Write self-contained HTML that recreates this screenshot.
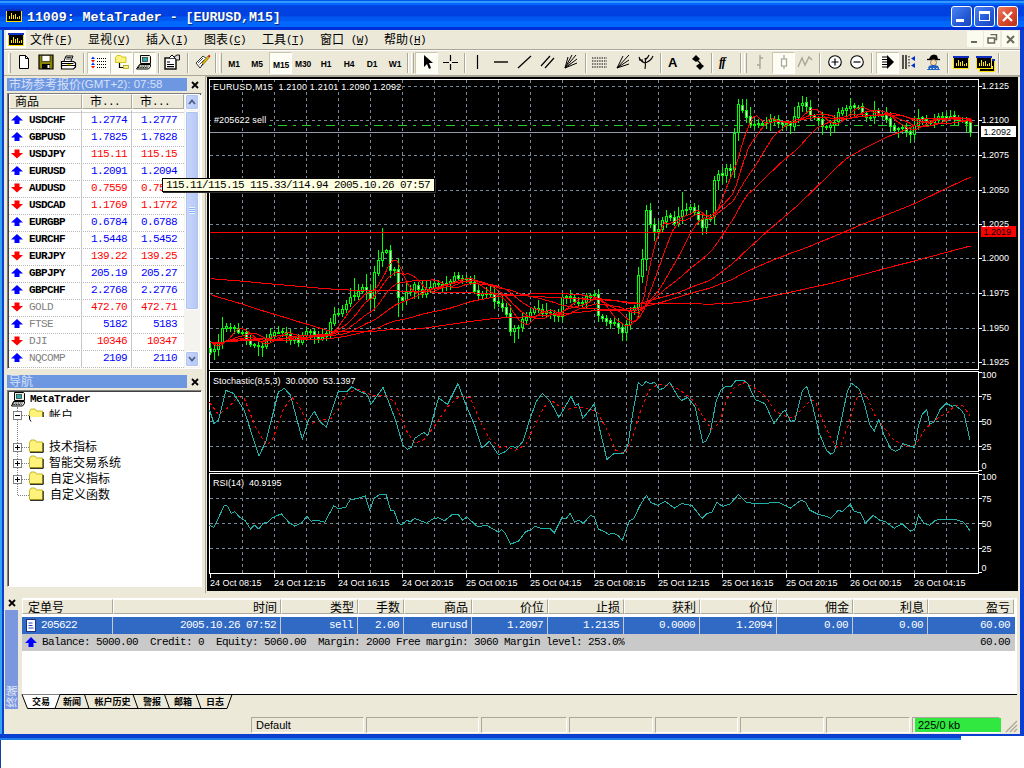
<!DOCTYPE html>
<html lang="zh-CN"><head><meta charset="utf-8"><title>11009: MetaTrader - [EURUSD,M15]</title>
<style>
*{box-sizing:border-box;margin:0;padding:0}
html,body{width:1024px;height:768px;overflow:hidden;background:#fff}
body{position:relative;font-family:"Liberation Mono","Noto Sans CJK SC",monospace;font-size:11px;color:#000}
.a{position:absolute}
.win{left:0;top:0;width:1024px;height:736px;background:#0A3FD0}
.win2{left:0;top:734px;width:961px;height:6px;background:linear-gradient(#0A3FD0 0,#0A3FD0 4px,#1C7CE8 4px)}
.client{left:4px;top:30px;width:1016px;height:704px;background:#ECE9D8}
.title{left:0;top:0;width:1024px;height:30px;background:linear-gradient(#0058E6 0,#0058E6 1px,#3399FF 1px,#3399FF 3px,#0066FF 3px,#0066FF 5px,#0044E2 5px,#0040E0 16px,#0058F0 17px,#0058F0 21px,#0068FF 21px,#0068FF 27px,#0030D8 27px,#0030D8 30px)}
.ttext{left:27px;top:10px;color:#fff;font:bold 13.3px/16px "Liberation Mono",monospace;letter-spacing:-0.05px;white-space:pre;text-shadow:1px 1px 0 #0A2A80}
.mi{top:31px;height:16px;line-height:15px;white-space:pre;font-size:12px}
.mi i{font-style:normal;font-size:11px;letter-spacing:-0.6px;position:relative;top:1px}
.mi u{text-decoration:underline}
.sm{font-family:"Liberation Mono","Noto Sans CJK SC",monospace;font-size:11px;letter-spacing:-0.6px;white-space:pre}
.cj{font-family:"Liberation Sans","Noto Sans CJK SC",sans-serif;font-size:12px;white-space:pre}
span.cj{position:relative;top:1px}
div.cj{margin-top:1px}
.mi span.cj,.th span.cj{top:2px}
.tb{font:bold 8.5px/12px "Liberation Sans",sans-serif;letter-spacing:-0.2px;top:58px;width:24px;text-align:center}
.sep{top:53px;width:2px;height:20px;border-left:1px solid #ACA899;border-right:1px solid #fff}
.grip{top:53px;width:3px;height:20px;border-left:1px solid #fff;border-right:1px solid #ACA899;background:#ECE9D8}
.pressed{top:52px;height:22px;background:#FDFDF4;border:1px solid #C8C5B2;border-right-color:#fff;border-bottom-color:#fff}
.ptitle{background:#6E97E2;color:#D6E0F8;height:13px;line-height:13px;padding-left:2px;overflow:hidden}
.row{left:9px;width:175px;height:17px;border-bottom:1px dotted #B8B8B8}
.row span{position:absolute;top:1px;line-height:13px}
.hdr{background:#ECE9D8;border:1px solid #fff;border-right-color:#ACA899;border-bottom-color:#ACA899;height:15px;line-height:12px;overflow:hidden}
.blue{color:#0000FF}.red{color:#FF0000}.gray{color:#808080}
.th{top:599px;height:15px;line-height:13px;text-align:right;padding-right:3px;background:#ECE9D8;border:1px solid #fff;border-right-color:#ACA899;border-bottom-color:#ACA899;overflow:hidden}
.td{top:617px;height:17px;line-height:16px;text-align:right;padding-right:4px;color:#fff;border-right:1px solid #C8C8C8}
.pane{top:717px;height:16px;border:1px solid #ACA899;border-right-color:#fff;border-bottom-color:#fff}
</style></head>
<body>
<div class="a win" style=""></div>
<div class="a win2" style=""></div>
<div class="a " style="left:0px;top:740px;width:1px;height:28px;background:#1040A0"></div>
<div class="a client" style=""></div>
<div class="a " style="left:0px;top:30px;width:2px;height:704px;background:#35A5F0"></div>
<div class="a title" style=""></div><svg class="a" style="left:6px;top:9px" width="16" height="13" viewBox="0 0 16 13" ><rect x="0.5" y="0.5" width="15" height="12" fill="#000" stroke="#FFE000"/><rect x="0" y="0" width="16" height="2" fill="#1030C0"/><path d="M3.500 10V7M5.500 10V4M7.500 10V6M9.500 10V5M11.500 10V8M13.500 10V7" stroke="#FFE800" stroke-width="1"/></svg><div class="a ttext" style="">11009: MetaTrader - [EURUSD,M15]</div><div class="a " style="left:951px;top:6px;width:21px;height:21px;border:1px solid #fff;border-radius:3px;background:linear-gradient(135deg,#4C84F0,#2458D8 60%,#1C48C0)"><div class="a" style="left:4px;top:12px;width:8px;height:3px;background:#fff"></div></div><div class="a " style="left:974px;top:6px;width:21px;height:21px;border:1px solid #fff;border-radius:3px;background:linear-gradient(135deg,#4C84F0,#2458D8 60%,#1C48C0)"><div class="a" style="left:4px;top:4px;width:11px;height:10px;border:1px solid #fff;border-top-width:3px"></div></div><div class="a " style="left:997px;top:6px;width:21px;height:21px;border:1px solid #fff;border-radius:3px;background:linear-gradient(135deg,#EC8060,#D8482C 55%,#B83018)"><svg class="a" style="left:3px;top:3px" width="13" height="13" viewBox="0 0 13 13" ><path d="M2 2L11 11M11 2L2 11" stroke="#fff" stroke-width="2.300"/></svg></div>
<div class="a " style="left:6px;top:30px;width:20px;height:18px;background:#fff"></div><svg class="a" style="left:8px;top:33px" width="16" height="13" viewBox="0 0 16 13" ><rect x="0.5" y="0.5" width="15" height="12" fill="#000" stroke="#FFE000"/><rect x="0" y="0" width="16" height="2" fill="#1030C0"/><path d="M3.500 10V7M5.500 10V4M7.500 10V6M9.500 10V5M11.500 10V8M13.500 10V7" stroke="#FFE800" stroke-width="1"/></svg><div class="a mi" style="left:30px"><span class="cj">文件</span><i>(<u>F</u>)</i></div><div class="a mi" style="left:88px"><span class="cj">显视</span><i>(<u>V</u>)</i></div><div class="a mi" style="left:146px"><span class="cj">插入</span><i>(<u>I</u>)</i></div><div class="a mi" style="left:204px"><span class="cj">图表</span><i>(<u>C</u>)</i></div><div class="a mi" style="left:262px"><span class="cj">工具</span><i>(<u>T</u>)</i></div><div class="a mi" style="left:320px"><span class="cj">窗口  </span><i>(<u>W</u>)</i></div><div class="a mi" style="left:384px"><span class="cj">帮助</span><i>(<u>H</u>)</i></div><div class="a " style="left:967px;top:31px;width:16px;height:16px;background:#FBFBF0"></div><div class="a " style="left:984px;top:31px;width:16px;height:16px;background:#FBFBF0"></div><div class="a " style="left:1002px;top:31px;width:16px;height:16px;background:#FBFBF0"></div><div class="a " style="left:971px;top:41px;width:6px;height:2px;background:#6A6A5A"></div><svg class="a" style="left:987px;top:34px" width="11" height="10" viewBox="0 0 11 10" ><path d="M3.5 0.5h6v5h-2M1 4h6.5v5H1z" stroke="#6A6A5A" stroke-width="1.5" fill="none"/></svg><svg class="a" style="left:1006px;top:35px" width="9" height="9" viewBox="0 0 9 9" ><path d="M1 1l7 7M8 1l-7 7" stroke="#6A6A5A" stroke-width="2"/></svg>
<div class="a " style="left:4px;top:49px;width:1016px;height:1px;background:#ACA899"></div><div class="a " style="left:4px;top:50px;width:1016px;height:1px;background:#fff"></div><div class="a " style="left:4px;top:75px;width:1016px;height:1px;background:#ACA899"></div><div class="a grip" style="left:8px"></div><div class="a grip" style="left:219px"></div><div class="a grip" style="left:411px"></div><div class="a grip" style="left:744px"></div><div class="a sep" style="left:215px"></div><div class="a sep" style="left:407px"></div><div class="a sep" style="left:740px"></div><div class="a sep" style="left:998px"></div><div class="a sep" style="left:83px"></div><div class="a sep" style="left:158px"></div><div class="a sep" style="left:187px"></div><div class="a sep" style="left:464px"></div><div class="a sep" style="left:585px"></div><div class="a sep" style="left:660px"></div><div class="a sep" style="left:711px"></div><div class="a sep" style="left:819px"></div><div class="a sep" style="left:871px"></div><div class="a sep" style="left:947px"></div><div class="a pressed" style="left:87px;width:23px"></div><div class="a pressed" style="left:110px;width:23px"></div><div class="a pressed" style="left:133px;width:23px"></div><div class="a pressed" style="left:269px;width:23px"></div><div class="a pressed" style="left:415px;width:23px"></div><div class="a pressed" style="left:772px;width:23px"></div><div class="a pressed" style="left:876px;width:23px"></div><svg class="a" style="left:16px;top:54px" width="16" height="16" viewBox="0 0 16 16" ><path d="M3.5 1.5h6l3 3v10h-9z" fill="#fff" stroke="#000"/><path d="M9.5 1.5v3h3" fill="none" stroke="#000"/></svg><svg class="a" style="left:38px;top:54px" width="16" height="16" viewBox="0 0 16 16" ><path d="M1 1h14v14H1z" fill="#8C8400"/><path d="M1 1h14v14H1z" fill="none" stroke="#000" stroke-width="1.2"/><rect x="4" y="1.5" width="8" height="6" fill="#fff" stroke="#000" stroke-width=".6"/><rect x="4" y="10" width="8" height="5" fill="#000"/><rect x="9.5" y="11" width="2" height="3" fill="#fff"/></svg><svg class="a" style="left:60px;top:54px" width="18" height="16" viewBox="0 0 18 16" ><path d="M4 7l2-5h7l-2 5" fill="#fff" stroke="#000"/><path d="M6.5 3.5h5M6 5h5" stroke="#000" stroke-width=".8"/><path d="M1.5 7.5h12l2 1.5v4l-2 2h-12z" fill="#fff" stroke="#000" stroke-width="1.2"/><path d="M1.5 11.5h13.5M1.5 9.5h12" stroke="#000"/><rect x="7" y="10" width="4" height="1.2" fill="#E8D800"/></svg><svg class="a" style="left:91px;top:55px" width="15" height="15" viewBox="0 0 15 15" ><path d="M0 4 l2 -2.5 l2 2.5z" fill="#0030FF"/><path d="M5.500 3.5h10" stroke="#000" stroke-width="1" stroke-dasharray="1 1" shape-rendering="crispEdges"/><path d="M0 5 l2 2.5 l2 -2.5z" fill="#FF0000"/><path d="M5.500 6.5h10" stroke="#000" stroke-width="1" stroke-dasharray="1 1" shape-rendering="crispEdges"/><path d="M0 10 l2 -2.5 l2 2.5z" fill="#0030FF"/><path d="M5.500 9.5h10" stroke="#000" stroke-width="1" stroke-dasharray="1 1" shape-rendering="crispEdges"/><path d="M0 11 l2 2.5 l2 -2.5z" fill="#FF0000"/><path d="M5.500 12.5h10" stroke="#000" stroke-width="1" stroke-dasharray="1 1" shape-rendering="crispEdges"/></svg><svg class="a" style="left:114px;top:54px" width="16" height="16" viewBox="0 0 16 16" ><path d="M1.500 3.500l1.500-2h3.500l1.500 1.500H12v5.500H1.500z" fill="#FFF27A" stroke="#C8B800" stroke-width=".8"/><path d="M5.500 9v4.500h4" stroke="#000" stroke-width="1.200" fill="none"/><rect x="9.500" y="11.500" width="5" height="3" fill="#FFF27A" stroke="#A09000" stroke-width=".7"/></svg><svg class="a" style="left:136px;top:54px" width="16" height="16" viewBox="0 0 16 16" ><path d="M4.500 1.500h9l1 1v7h-10z" fill="#F0F0E8" stroke="#000"/><rect x="6.500" y="3.500" width="5" height="4" fill="#20B0B0" stroke="#404040" stroke-width=".8"/><path d="M3.500 10.500h11v2l-2 2.500H0.500z" fill="#E8E8E0" stroke="#000"/><path d="M3 12h9.500M2 13.500h9.500" stroke="#000" stroke-width="1" stroke-dasharray="1 .7"/></svg><svg class="a" style="left:164px;top:54px" width="17" height="16" viewBox="0 0 17 16" ><rect x="1" y="4" width="11" height="11" fill="#fff" stroke="#000" stroke-width="1.4"/><path d="M3 8h3M3 10.5h7M3 12.7h7" stroke="#000" stroke-width="1.2"/><path d="M5 4l3-3 3 3" fill="#fff" stroke="#000"/><path d="M10 3l3-2h2.5v5l-3 0z" fill="#D8D8D8" stroke="#000" stroke-width=".9"/></svg><svg class="a" style="left:195px;top:54px" width="16" height="16" viewBox="0 0 16 16" ><path d="M1 9l7-7 4 3-7 9z" fill="#fff" stroke="#000" stroke-width=".8"/><path d="M3 9l5-5M4.5 10.5l5-5M6 12l3-3" stroke="#000" stroke-width=".7"/><path d="M7 9l6-7 1.5 1.2-6 7z" fill="#E8C000" stroke="#605000" stroke-width=".6"/><path d="M13 2l1-1.2 1.5 1.2-1 1.2z" fill="#E00000"/></svg><div class="a tb" style="left:222px;top:58px">M1</div><div class="a tb" style="left:245px;top:58px">M5</div><div class="a tb" style="left:269px;top:59px">M15</div><div class="a tb" style="left:291px;top:58px">M30</div><div class="a tb" style="left:314px;top:58px">H1</div><div class="a tb" style="left:337px;top:58px">H4</div><div class="a tb" style="left:360px;top:58px">D1</div><div class="a tb" style="left:383px;top:58px">W1</div><svg class="a" style="left:421px;top:54px" width="14" height="16" viewBox="0 0 14 16" ><path d="M3 1v12l3-3 2 5 2-1-2-5h4z" fill="#000"/></svg><svg class="a" style="left:443px;top:55px" width="15" height="15" viewBox="0 0 15 15" ><path d="M7.5 0v6M7.5 9v6M0 7.5h6M9 7.5h6" stroke="#000" stroke-width="1.2"/></svg><svg class="a" style="left:470px;top:54px" width="16" height="16" viewBox="0 0 16 16" ><path d="M7.5 1v14" stroke="#000" stroke-width="1.2"/></svg><svg class="a" style="left:493px;top:54px" width="16" height="16" viewBox="0 0 16 16" ><path d="M1 8h14" stroke="#000" stroke-width="1.4"/></svg><svg class="a" style="left:517px;top:54px" width="16" height="16" viewBox="0 0 16 16" ><path d="M1 14L14 2" stroke="#000" stroke-width="1.2"/></svg><svg class="a" style="left:540px;top:54px" width="16" height="16" viewBox="0 0 16 16" ><path d="M1 12L10 2M5 14L14 4" stroke="#000" stroke-width="1.2"/></svg><svg class="a" style="left:563px;top:54px" width="16" height="16" viewBox="0 0 16 16" ><path d="M2 14L13 1M2 14L14 5M2 14L14 9M2 14L9 1M2 14L5 3" stroke="#000" stroke-width="1"/></svg><svg class="a" style="left:592px;top:55px" width="15" height="15" viewBox="0 0 15 15" ><path d="M0 3h15M0 6h15M0 9h15M0 12h15" stroke="#000" stroke-width="1.2" stroke-dasharray="1.4 1"/></svg><svg class="a" style="left:615px;top:54px" width="16" height="16" viewBox="0 0 16 16" ><path d="M2 14L14 1M2 14L14 6M2 14L14 10M2 14L8 2" stroke="#000" stroke-width="1"/></svg><svg class="a" style="left:638px;top:54px" width="16" height="16" viewBox="0 0 16 16" ><path d="M7 15Q8 8 7 4M7 9Q2 7 1 3M7 9Q13 7 15 2M7 6Q10 4 11 1M1 6h4" stroke="#000" stroke-width="1.1" fill="none"/></svg><div class="a " style="left:668px;top:55px;font:bold 13px/16px Liberation Sans,sans-serif">A</div><svg class="a" style="left:690px;top:54px" width="16" height="16" viewBox="0 0 16 16" ><path d="M2 5l4-4 4 4-4 3z" fill="#000"/><path d="M6 12l4-3 4 3-4 4z" fill="#000"/><path d="M7 6l4 4" stroke="#000" stroke-width="1.2"/></svg><div class="a " style="left:719px;top:54px;font:italic bold 12px/16px Liberation Serif,serif;letter-spacing:-1px">ff</div><svg class="a" style="left:752px;top:54px" width="16" height="16" viewBox="0 0 16 16" ><path d="M8 1v14M8 4h3M5 11h3" stroke="#A8A598" stroke-width="1.4"/></svg><svg class="a" style="left:776px;top:54px" width="16" height="16" viewBox="0 0 16 16" ><path d="M8 1v14" stroke="#A8A598" stroke-width="1.2"/><rect x="5.5" y="5" width="5" height="7" fill="#fff" stroke="#A8A598" stroke-width="1.2"/></svg><svg class="a" style="left:797px;top:54px" width="16" height="16" viewBox="0 0 16 16" ><path d="M1 13L5 4l3 7 4-8 3 3" stroke="#A8A598" stroke-width="1.4" fill="none"/></svg><svg class="a" style="left:827px;top:54px" width="16" height="16" viewBox="0 0 16 16" ><circle cx="8" cy="8" r="6.3" fill="#fff" stroke="#000" stroke-width="1.1"/><path d="M4.5 8h7M8 4.5v7" stroke="#000" stroke-width="1.2"/></svg><svg class="a" style="left:849px;top:54px" width="16" height="16" viewBox="0 0 16 16" ><circle cx="8" cy="8" r="6.3" fill="#fff" stroke="#000" stroke-width="1.1"/><path d="M4.5 8h7" stroke="#000" stroke-width="1.2"/></svg><svg class="a" style="left:880px;top:54px" width="16" height="16" viewBox="0 0 16 16" ><path d="M2 3h5M2 5.5h5M2 8h5M2 10.5h5M2 13h5" stroke="#000" stroke-width="1"/><path d="M7 1l7 7-7 7z" fill="#000"/></svg><svg class="a" style="left:901px;top:54px" width="16" height="16" viewBox="0 0 16 16" ><path d="M2 1v14M5 1v14" stroke="#000" stroke-width="1.3"/><path d="M8 2v12" stroke="#000" stroke-dasharray="1.5 1.5"/><path d="M14 2l-4 2.5 4 2.5zM14 9l-4 2.500 4 2.500z" fill="#0030D0"/></svg><svg class="a" style="left:925px;top:54px" width="17" height="17" viewBox="0 0 17 17" ><path d="M4 5h9l-1-3.500-3-1-3 1z" fill="#000"/><path d="M2 5.500h13" stroke="#000" stroke-width="1.3"/><circle cx="8.500" cy="8.500" r="3" fill="#F8D8B0" stroke="#604020" stroke-width=".6"/><path d="M2 16l2-4 3-1h3l3 1 2 4z" fill="#2060C0"/><path d="M2 14.500h13" stroke="#fff" stroke-width=".8" stroke-dasharray="1.500 1.500"/></svg><svg class="a" style="left:953px;top:56px" width="16" height="13" viewBox="0 0 16 13" ><rect x="0.5" y="0.5" width="15" height="12" fill="#000" stroke="#FFE000"/><rect x="0" y="0" width="16" height="2" fill="#1030C0"/><path d="M3.500 10V7M5.500 10V4M7.500 10V6M9.500 10V5M11.500 10V8M13.500 10V7" stroke="#FFE800" stroke-width="1"/></svg><svg class="a" style="left:979px;top:59px" width="16" height="13" viewBox="0 0 16 13" ><rect x="0.5" y="0.5" width="15" height="12" fill="#000" stroke="#FFE000"/><rect x="0" y="0" width="16" height="2" fill="#1030C0"/><path d="M3.500 10V7M5.500 10V4M7.500 10V6M9.500 10V5M11.500 10V8M13.500 10V7" stroke="#FFE800" stroke-width="1"/></svg><svg class="a" style="left:976px;top:56px" width="16" height="13" viewBox="0 0 16 13" ><rect x="0.5" y="0.5" width="15" height="12" fill="#000" stroke="#FFE000"/><rect x="0" y="0" width="16" height="2" fill="#1030C0"/><path d="M3.500 10V7M5.500 10V4M7.500 10V6M9.500 10V5M11.500 10V8M13.500 10V7" stroke="#FFE800" stroke-width="1"/></svg>
<div class="a ptitle" style="left:7px;top:78px;width:180px;height:13px;"><span class="cj" style="font-size:12px;top:1px">市场参考报价</span><span style="font:11.500px/13px Liberation Sans,sans-serif;position:relative;top:0">(GMT+2): 07:58</span></div><svg class="a" style="left:191px;top:81px" width="8" height="8" viewBox="0 0 8 8" ><path d="M1 1l6 6M7 1l-6 6" stroke="#000" stroke-width="1.800"/></svg><div class="a " style="left:7px;top:93px;width:195px;height:276px;background:#fff;border:1px solid #808080;border-right-color:#fff;border-bottom-color:#fff"></div><div class="a " style="left:8px;top:94px;width:193px;height:274px;border-left:1px solid #404040;border-top:1px solid #404040"></div><div class="a hdr" style="left:9px;top:94px;width:73px;height:15px;padding-left:5px"><span class="cj">商品</span></div><div class="a hdr" style="left:82px;top:94px;width:50px;height:15px;padding-left:7px"><span class="cj">市</span><span class="sm">...</span></div><div class="a hdr" style="left:132px;top:94px;width:52px;height:15px;padding-left:7px"><span class="cj">市</span><span class="sm">...</span></div><div class="a " style="left:9px;top:109px;width:175px;height:4px;background:#fff;border-bottom:1px solid #D0D0D0"></div><div class="a row" style="top:113px"><svg class="a" style="left:2px;top:2px" width="12" height="10" viewBox="0 0 12 11" preserveAspectRatio="none"><path d="M6 0l6 6H8.500v4h-5V6H0z" fill="#0000FF"/></svg><span class="sm " style="left:20px;font-weight:bold;letter-spacing:-0.6px">USDCHF</span><span class="sm blue" style="right:57px">1.2774</span><span class="sm blue" style="right:7px">1.2777</span></div><div class="a row" style="top:130px"><svg class="a" style="left:2px;top:2px" width="12" height="10" viewBox="0 0 12 11" preserveAspectRatio="none"><path d="M6 0l6 6H8.500v4h-5V6H0z" fill="#0000FF"/></svg><span class="sm " style="left:20px;font-weight:bold;letter-spacing:-0.6px">GBPUSD</span><span class="sm blue" style="right:57px">1.7825</span><span class="sm blue" style="right:7px">1.7828</span></div><div class="a row" style="top:147px"><svg class="a" style="left:2px;top:2px" width="12" height="10" viewBox="0 0 12 11" preserveAspectRatio="none"><path d="M6 10.500l6-6H8.500V0.500h-5v4H0z" fill="#FF0000"/></svg><span class="sm " style="left:20px;font-weight:bold;letter-spacing:-0.6px">USDJPY</span><span class="sm red" style="right:57px">115.11</span><span class="sm red" style="right:7px">115.15</span></div><div class="a row" style="top:164px"><svg class="a" style="left:2px;top:2px" width="12" height="10" viewBox="0 0 12 11" preserveAspectRatio="none"><path d="M6 0l6 6H8.500v4h-5V6H0z" fill="#0000FF"/></svg><span class="sm " style="left:20px;font-weight:bold;letter-spacing:-0.6px">EURUSD</span><span class="sm blue" style="right:57px">1.2091</span><span class="sm blue" style="right:7px">1.2094</span></div><div class="a row" style="top:181px"><svg class="a" style="left:2px;top:2px" width="12" height="10" viewBox="0 0 12 11" preserveAspectRatio="none"><path d="M6 10.500l6-6H8.500V0.500h-5v4H0z" fill="#FF0000"/></svg><span class="sm " style="left:20px;font-weight:bold;letter-spacing:-0.6px">AUDUSD</span><span class="sm red" style="right:57px">0.7559</span><span class="sm red" style="right:7px">0.7562</span></div><div class="a row" style="top:198px"><svg class="a" style="left:2px;top:2px" width="12" height="10" viewBox="0 0 12 11" preserveAspectRatio="none"><path d="M6 10.500l6-6H8.500V0.500h-5v4H0z" fill="#FF0000"/></svg><span class="sm " style="left:20px;font-weight:bold;letter-spacing:-0.6px">USDCAD</span><span class="sm red" style="right:57px">1.1769</span><span class="sm red" style="right:7px">1.1772</span></div><div class="a row" style="top:215px"><svg class="a" style="left:2px;top:2px" width="12" height="10" viewBox="0 0 12 11" preserveAspectRatio="none"><path d="M6 0l6 6H8.500v4h-5V6H0z" fill="#0000FF"/></svg><span class="sm " style="left:20px;font-weight:bold;letter-spacing:-0.6px">EURGBP</span><span class="sm blue" style="right:57px">0.6784</span><span class="sm blue" style="right:7px">0.6788</span></div><div class="a row" style="top:232px"><svg class="a" style="left:2px;top:2px" width="12" height="10" viewBox="0 0 12 11" preserveAspectRatio="none"><path d="M6 0l6 6H8.500v4h-5V6H0z" fill="#0000FF"/></svg><span class="sm " style="left:20px;font-weight:bold;letter-spacing:-0.6px">EURCHF</span><span class="sm blue" style="right:57px">1.5448</span><span class="sm blue" style="right:7px">1.5452</span></div><div class="a row" style="top:249px"><svg class="a" style="left:2px;top:2px" width="12" height="10" viewBox="0 0 12 11" preserveAspectRatio="none"><path d="M6 10.500l6-6H8.500V0.500h-5v4H0z" fill="#FF0000"/></svg><span class="sm " style="left:20px;font-weight:bold;letter-spacing:-0.6px">EURJPY</span><span class="sm red" style="right:57px">139.22</span><span class="sm red" style="right:7px">139.25</span></div><div class="a row" style="top:266px"><svg class="a" style="left:2px;top:2px" width="12" height="10" viewBox="0 0 12 11" preserveAspectRatio="none"><path d="M6 0l6 6H8.500v4h-5V6H0z" fill="#0000FF"/></svg><span class="sm " style="left:20px;font-weight:bold;letter-spacing:-0.6px">GBPJPY</span><span class="sm blue" style="right:57px">205.19</span><span class="sm blue" style="right:7px">205.27</span></div><div class="a row" style="top:283px"><svg class="a" style="left:2px;top:2px" width="12" height="10" viewBox="0 0 12 11" preserveAspectRatio="none"><path d="M6 0l6 6H8.500v4h-5V6H0z" fill="#0000FF"/></svg><span class="sm " style="left:20px;font-weight:bold;letter-spacing:-0.6px">GBPCHF</span><span class="sm blue" style="right:57px">2.2768</span><span class="sm blue" style="right:7px">2.2776</span></div><div class="a row" style="top:300px"><svg class="a" style="left:2px;top:2px" width="12" height="10" viewBox="0 0 12 11" preserveAspectRatio="none"><path d="M6 10.500l6-6H8.500V0.500h-5v4H0z" fill="#FF0000"/></svg><span class="sm gray" style="left:20px;">GOLD</span><span class="sm red" style="right:57px">472.70</span><span class="sm red" style="right:7px">472.71</span></div><div class="a row" style="top:317px"><svg class="a" style="left:2px;top:2px" width="12" height="10" viewBox="0 0 12 11" preserveAspectRatio="none"><path d="M6 0l6 6H8.500v4h-5V6H0z" fill="#0000FF"/></svg><span class="sm gray" style="left:20px;">FTSE</span><span class="sm blue" style="right:57px">5182</span><span class="sm blue" style="right:7px">5183</span></div><div class="a row" style="top:334px"><svg class="a" style="left:2px;top:2px" width="12" height="10" viewBox="0 0 12 11" preserveAspectRatio="none"><path d="M6 10.500l6-6H8.500V0.500h-5v4H0z" fill="#FF0000"/></svg><span class="sm gray" style="left:20px;">DJI</span><span class="sm red" style="right:57px">10346</span><span class="sm red" style="right:7px">10347</span></div><div class="a row" style="top:351px"><svg class="a" style="left:2px;top:2px" width="12" height="10" viewBox="0 0 12 11" preserveAspectRatio="none"><path d="M6 0l6 6H8.500v4h-5V6H0z" fill="#0000FF"/></svg><span class="sm gray" style="left:20px;">NQCOMP</span><span class="sm blue" style="right:57px">2109</span><span class="sm blue" style="right:7px">2110</span></div><div class="a " style="left:81px;top:110px;width:1px;height:258px;background:#C8C8C8"></div><div class="a " style="left:131px;top:110px;width:1px;height:258px;background:#C8C8C8"></div><div class="a " style="left:184px;top:94px;width:16px;height:274px;background:#F4F3EE"></div><div class="a " style="left:185px;top:94px;width:14px;height:16px;background:linear-gradient(90deg,#C8D6FB,#B4C8F6);border:1px solid #fff;border-radius:2px;box-shadow:0 0 0 1px #B0C4F0 inset"><svg class="a" style="left:2px;top:4px" width="8" height="6" viewBox="0 0 8 6" ><path d="M1 5l3-3.500 3 3.500" stroke="#4D6185" stroke-width="1.800" fill="none"/></svg></div><div class="a " style="left:185px;top:351px;width:14px;height:16px;background:linear-gradient(90deg,#C8D6FB,#B4C8F6);border:1px solid #fff;border-radius:2px;box-shadow:0 0 0 1px #B0C4F0 inset"><svg class="a" style="left:2px;top:4px" width="8" height="6" viewBox="0 0 8 6" ><path d="M1 1l3 3.500 3-3.500" stroke="#4D6185" stroke-width="1.800" fill="none"/></svg></div><div class="a " style="left:185px;top:111px;width:14px;height:199px;background:linear-gradient(90deg,#C8D6FB,#B4C8F6);border:1px solid #fff;border-radius:2px;box-shadow:0 0 0 1px #B0C4F0 inset"><div class="a" style="left:3px;top:95px;width:6px;height:7px;background:repeating-linear-gradient(#EEF4FE 0,#EEF4FE 1px,#8CB0F8 1px,#8CB0F8 2px)"></div></div>
<div class="a ptitle" style="left:7px;top:375px;width:180px;height:13px;"><span class="cj" style="font-size:12px;top:1px">导航</span></div><svg class="a" style="left:191px;top:378px" width="8" height="8" viewBox="0 0 8 8" ><path d="M1 1l6 6M7 1l-6 6" stroke="#000" stroke-width="1.800"/></svg><div class="a " style="left:7px;top:390px;width:195px;height:197px;background:#fff;border:1px solid #808080;border-right-color:#fff;border-bottom-color:#fff"></div><div class="a " style="left:8px;top:391px;width:193px;height:195px;border-left:1px solid #404040;border-top:1px solid #404040"></div><svg class="a" style="left:11px;top:392px" width="15" height="15" viewBox="0 0 15 15" ><path d="M3.500 0.500h9l1 1v7h-10z" fill="#F0F0E8" stroke="#000"/><rect x="5.500" y="2.500" width="5" height="4" fill="#20B0B0" stroke="#404040" stroke-width=".8"/><path d="M2.500 9.500h11v2l-2 2.500H0.500z" fill="#E8E8E0" stroke="#000"/><path d="M2 11h9.500M1.500 12.500h9" stroke="#000" stroke-width="1" stroke-dasharray="1 .7"/></svg><div class="a sm" style="left:30px;top:393px;font-weight:bold;line-height:13px">MetaTrader</div><div class="a " style="left:17px;top:407px;width:1px;height:88px;border-left:1px dotted #808080"></div><div class="a " style="left:18px;top:415px;width:11px;height:1px;border-top:1px dotted #808080"></div><div class="a " style="left:18px;top:447px;width:11px;height:1px;border-top:1px dotted #808080"></div><div class="a " style="left:18px;top:463px;width:11px;height:1px;border-top:1px dotted #808080"></div><div class="a " style="left:18px;top:479px;width:11px;height:1px;border-top:1px dotted #808080"></div><div class="a " style="left:18px;top:495px;width:11px;height:1px;border-top:1px dotted #808080"></div><div class="a " style="left:13px;top:411px;width:9px;height:9px;background:#fff;border:1px solid #808080"><svg class="a" style="left:-1px;top:-1px" width="9" height="9" viewBox="0 0 9 9" ><path d="M2 4.500h5" stroke="#000"/></svg></div><div class="a " style="left:13px;top:443px;width:9px;height:9px;background:#fff;border:1px solid #808080"><svg class="a" style="left:-1px;top:-1px" width="9" height="9" viewBox="0 0 9 9" ><path d="M2 4.500h5M4.500 2v5" stroke="#000"/></svg></div><div class="a " style="left:13px;top:459px;width:9px;height:9px;background:#fff;border:1px solid #808080"><svg class="a" style="left:-1px;top:-1px" width="9" height="9" viewBox="0 0 9 9" ><path d="M2 4.500h5M4.500 2v5" stroke="#000"/></svg></div><div class="a " style="left:13px;top:475px;width:9px;height:9px;background:#fff;border:1px solid #808080"><svg class="a" style="left:-1px;top:-1px" width="9" height="9" viewBox="0 0 9 9" ><path d="M2 4.500h5M4.500 2v5" stroke="#000"/></svg></div><svg class="a" style="left:29px;top:408px" width="15" height="14" viewBox="0 0 15 14" ><path d="M0.500 3.500l1.500-2.500h4l1.500 2h6v9.500h-13z" fill="#FFF27A" stroke="#B8A800" stroke-width=".8"/><path d="M1 13.300h13.200V4" stroke="#000" stroke-width="1" fill="none"/></svg><div class="a cj" style="left:49px;top:408px;line-height:14px">帐户</div><svg class="a" style="left:29px;top:439px" width="15" height="14" viewBox="0 0 15 14" ><path d="M0.500 3.500l1.500-2.500h4l1.500 2h6v9.500h-13z" fill="#FFF27A" stroke="#B8A800" stroke-width=".8"/><path d="M1 13.300h13.200V4" stroke="#000" stroke-width="1" fill="none"/></svg><div class="a cj" style="left:49px;top:439px;line-height:14px">技术指标</div><svg class="a" style="left:29px;top:455px" width="15" height="14" viewBox="0 0 15 14" ><path d="M0.500 3.500l1.500-2.500h4l1.500 2h6v9.500h-13z" fill="#FFF27A" stroke="#B8A800" stroke-width=".8"/><path d="M1 13.300h13.200V4" stroke="#000" stroke-width="1" fill="none"/></svg><div class="a cj" style="left:49px;top:455px;line-height:14px">智能交易系统</div><svg class="a" style="left:29px;top:471px" width="15" height="14" viewBox="0 0 15 14" ><path d="M0.500 3.500l1.500-2.500h4l1.500 2h6v9.500h-13z" fill="#FFF27A" stroke="#B8A800" stroke-width=".8"/><path d="M1 13.300h13.200V4" stroke="#000" stroke-width="1" fill="none"/></svg><div class="a cj" style="left:50px;top:471px;line-height:14px">自定义指标</div><svg class="a" style="left:29px;top:487px" width="15" height="14" viewBox="0 0 15 14" ><path d="M0.500 3.500l1.500-2.500h4l1.500 2h6v9.500h-13z" fill="#FFF27A" stroke="#B8A800" stroke-width=".8"/><path d="M1 13.300h13.200V4" stroke="#000" stroke-width="1" fill="none"/></svg><div class="a cj" style="left:50px;top:487px;line-height:14px">自定义函数</div><div class="a " style="left:24px;top:417px;width:170px;height:21px;background:#fff"></div><svg class="a" style="left:28px;top:416px" width="4" height="6" viewBox="0 0 4 6" ><path d="M1.500 0Q1 4 3 5.500" stroke="#000" fill="none"/></svg>
<div class="a " style="left:205px;top:76px;width:815px;height:517px;border-left:1px solid #ACA899;border-top:1px solid #ACA899"></div>
<svg width="811" height="514" viewBox="207 77 811 514" style="position:absolute;left:207px;top:77px;display:block" shape-rendering="crispEdges" font-family="Liberation Sans, sans-serif" font-size="9px">
<rect x="207" y="77" width="811" height="514" fill="#000"/>
<path d="M242.5 80V369M242.5 372V471M242.5 474V573M274.5 80V369M274.5 372V471M274.5 474V573M306.5 80V369M306.5 372V471M306.5 474V573M338.5 80V369M338.5 372V471M338.5 474V573M370.5 80V369M370.5 372V471M370.5 474V573M402.5 80V369M402.5 372V471M402.5 474V573M434.5 80V369M434.5 372V471M434.5 474V573M466.5 80V369M466.5 372V471M466.5 474V573M498.5 80V369M498.5 372V471M498.5 474V573M530.5 80V369M530.5 372V471M530.5 474V573M562.5 80V369M562.5 372V471M562.5 474V573M594.5 80V369M594.5 372V471M594.5 474V573M626.5 80V369M626.5 372V471M626.5 474V573M658.5 80V369M658.5 372V471M658.5 474V573M690.5 80V369M690.5 372V471M690.5 474V573M722.5 80V369M722.5 372V471M722.5 474V573M754.5 80V369M754.5 372V471M754.5 474V573M786.5 80V369M786.5 372V471M786.5 474V573M818.5 80V369M818.5 372V471M818.5 474V573M850.5 80V369M850.5 372V471M850.5 474V573M882.5 80V369M882.5 372V471M882.5 474V573M914.5 80V369M914.5 372V471M914.5 474V573M946.5 80V369M946.5 372V471M946.5 474V573M210 86.5H978M210 120.5H978M210 155.5H978M210 190.5H978M210 224.5H978M210 258.5H978M210 293.5H978M210 328.5H978M210 362.5H978M210 396.5H978M210 421.5H978M210 446.5H978M210 498.5H978M210 523.5H978M210 548.5H978" stroke="#778899" stroke-width="1" stroke-dasharray="3 3" fill="none"/>
<path d="M209.5 79.5H978.5V369.5H209.5ZM209.5 371.5H978.5V471.5H209.5ZM209.5 473.5H978.5V573.5H209.5Z" stroke="#fff" fill="none"/>
<path d="M979 86.5h3M979 120.5h3M979 155.5h3M979 190.5h3M979 224.5h3M979 258.5h3M979 293.5h3M979 328.5h3M979 362.5h3M979 372.5h3M979 396.5h3M979 421.5h3M979 446.5h3M979 470.5h3M979 474.5h3M979 498.5h3M979 523.5h3M979 548.5h3M979 572.5h3M210.5 574v4M274.5 574v4M338.5 574v4M402.5 574v4M466.5 574v4M530.5 574v4M594.5 574v4M658.5 574v4M722.5 574v4M786.5 574v4M850.5 574v4M914.5 574v4" stroke="#fff" fill="none"/>
<path d="M210 125.5H978" stroke="#22CC22" stroke-dasharray="9 6 3 6" stroke-dashoffset="4" fill="none"/>
<path d="M210 132.5H978" stroke="#9498AC" fill="none"/>
<path d="M210.5 341V355M214.5 344V360M218.5 334V356M222.5 317V349M226.5 323V332M230.5 323V332M234.5 325V334M238.5 323V334M242.5 330V335M246.5 329V345M250.5 335V347M254.5 343V348M258.5 340V356M262.5 343V357M266.5 334V349M270.5 328V342M274.5 330V339M278.5 326V334M282.5 328V337M286.5 327V343M290.5 329V345M294.5 336V344M298.5 334V347M302.5 332V345M306.5 327V341M310.5 329V339M314.5 328V344M318.5 331V343M322.5 328V341M326.5 331V341M330.5 318V339M334.5 307V326M338.5 308V316M342.5 305V317M346.5 300V313M350.5 288V307M354.5 278V301M358.5 284V300M362.5 284V294M366.5 274V300M370.5 285V308M374.5 266V311M378.5 250V276M382.5 228V267M386.5 249V254M390.5 245V278M394.5 267V276M398.5 258V317M402.5 296V310M406.5 283V305M410.5 285V296M414.5 282V299M418.5 282V299M422.5 280V298M426.5 280V298M430.5 281V293M434.5 280V293M438.5 280V288M442.5 281V292M446.5 276V291M450.5 279V290M454.5 272V284M458.5 272V281M462.5 275V284M466.5 275V283M470.5 276V285M474.5 275V294M478.5 284V299M482.5 291V299M486.5 287V298M490.5 285V298M494.5 285V309M498.5 294V307M502.5 295V312M506.5 303V318M510.5 305V336M514.5 325V343M518.5 325V339M522.5 312V332M526.5 312V324M530.5 308V321M534.5 306V315M538.5 300V313M542.5 304V317M546.5 303V317M550.5 309V319M554.5 310V322M558.5 309V322M562.5 293V322M566.5 295V304M570.5 290V303M574.5 294V305M578.5 297V307M582.5 297V307M586.5 293V308M590.5 293V302M594.5 290V300M598.5 289V322M602.5 314V322M606.5 315V326M610.5 318V329M614.5 317V326M618.5 318V334M622.5 323V341M626.5 320V341M630.5 307V330M634.5 305V315M638.5 267V318M642.5 249V283M646.5 205V271M650.5 203V228M654.5 218V241M658.5 221V235M662.5 217V233M666.5 210V228M670.5 213V221M674.5 211V226M678.5 207V227M682.5 192V224M686.5 203V216M690.5 204V213M694.5 203V216M698.5 205V225M702.5 215V235M706.5 210V234M710.5 214V222M714.5 176V225M718.5 170V190M722.5 167V184M726.5 164V183M730.5 164V177M734.5 128V178M738.5 99V141M742.5 99V113M746.5 99V123M750.5 107V128M754.5 119V129M758.5 119V128M762.5 120V126M766.5 117V129M770.5 114V131M774.5 116V125M778.5 115V128M782.5 121V131M786.5 120V129M790.5 121V134M794.5 107V131M798.5 102V123M802.5 96V112M806.5 97V114M810.5 100V120M814.5 114V120M818.5 116V126M822.5 112V135M826.5 125V130M830.5 120V136M834.5 115V133M838.5 108V126M842.5 107V116M846.5 105V120M850.5 98V115M854.5 103V116M858.5 105V110M862.5 103V117M866.5 111V122M870.5 115V121M874.5 101V124M878.5 108V117M882.5 112V120M886.5 107V123M890.5 112V132M894.5 123V132M898.5 127V138M902.5 124V134M906.5 123V137M910.5 127V143M914.5 116V140M918.5 109V130M922.5 116V125M926.5 115V125M930.5 121V126M934.5 114V128M938.5 113V124M942.5 112V123M946.5 112V123M950.5 110V120M954.5 111V125M958.5 115V126M962.5 117V123M966.5 117V132M970.5 119V137" stroke="#00FF00" fill="none"/>
<path d="M213.5 349.5h2v2h-2zM217.5 343.5h2v6h-2zM221.5 328.5h2v15h-2zM225.5 326.5h2v2h-2zM233.5 327.5h2v1h-2zM261.5 346.5h2v1h-2zM265.5 338.5h2v8h-2zM269.5 334.5h2v4h-2zM273.5 332.5h2v3h-2zM277.5 332.5h2v1h-2zM281.5 331.5h2v1h-2zM293.5 337.5h2v3h-2zM301.5 335.5h2v7h-2zM305.5 331.5h2v4h-2zM321.5 337.5h2v2h-2zM325.5 333.5h2v3h-2zM329.5 322.5h2v12h-2zM333.5 314.5h2v9h-2zM337.5 313.5h2v1h-2zM341.5 309.5h2v4h-2zM345.5 304.5h2v5h-2zM349.5 297.5h2v6h-2zM353.5 295.5h2v1h-2zM357.5 291.5h2v5h-2zM361.5 287.5h2v4h-2zM373.5 272.5h2v26h-2zM377.5 260.5h2v13h-2zM381.5 252.5h2v8h-2zM385.5 250.5h2v2h-2zM393.5 269.5h2v1h-2zM405.5 292.5h2v8h-2zM409.5 291.5h2v1h-2zM413.5 284.5h2v7h-2zM425.5 289.5h2v5h-2zM429.5 287.5h2v2h-2zM433.5 283.5h2v5h-2zM445.5 283.5h2v2h-2zM449.5 281.5h2v2h-2zM453.5 276.5h2v5h-2zM481.5 293.5h2v2h-2zM489.5 293.5h2v1h-2zM513.5 328.5h2v3h-2zM517.5 327.5h2v1h-2zM521.5 319.5h2v8h-2zM525.5 317.5h2v3h-2zM529.5 312.5h2v5h-2zM533.5 308.5h2v4h-2zM537.5 308.5h2v1h-2zM545.5 311.5h2v2h-2zM561.5 297.5h2v19h-2zM565.5 296.5h2v1h-2zM577.5 302.5h2v1h-2zM581.5 302.5h2v1h-2zM585.5 296.5h2v6h-2zM589.5 295.5h2v2h-2zM593.5 294.5h2v1h-2zM625.5 324.5h2v8h-2zM629.5 310.5h2v14h-2zM633.5 307.5h2v3h-2zM637.5 275.5h2v32h-2zM641.5 259.5h2v17h-2zM645.5 210.5h2v49h-2zM657.5 229.5h2v2h-2zM661.5 220.5h2v9h-2zM665.5 216.5h2v5h-2zM677.5 216.5h2v7h-2zM681.5 210.5h2v6h-2zM685.5 209.5h2v1h-2zM689.5 207.5h2v2h-2zM705.5 219.5h2v8h-2zM709.5 217.5h2v2h-2zM713.5 180.5h2v36h-2zM717.5 174.5h2v6h-2zM725.5 168.5h2v7h-2zM733.5 133.5h2v36h-2zM737.5 104.5h2v28h-2zM753.5 124.5h2v1h-2zM757.5 123.5h2v1h-2zM765.5 122.5h2v1h-2zM769.5 119.5h2v2h-2zM773.5 119.5h2v1h-2zM793.5 116.5h2v10h-2zM797.5 106.5h2v11h-2zM801.5 103.5h2v2h-2zM829.5 125.5h2v2h-2zM833.5 122.5h2v3h-2zM837.5 112.5h2v9h-2zM841.5 110.5h2v3h-2zM845.5 108.5h2v2h-2zM849.5 106.5h2v2h-2zM857.5 107.5h2v1h-2zM869.5 117.5h2v1h-2zM873.5 110.5h2v7h-2zM897.5 128.5h2v1h-2zM913.5 125.5h2v9h-2zM917.5 118.5h2v7h-2zM933.5 120.5h2v2h-2zM937.5 116.5h2v4h-2zM949.5 116.5h2v2h-2z" stroke="#00FF00" fill="#000"/>
<path d="M209.5 348.5h2v4h-2zM229.5 327.5h2v1h-2zM237.5 328.5h2v4h-2zM241.5 332.5h2v1h-2zM245.5 332.5h2v8h-2zM249.5 340.5h2v4h-2zM253.5 344.5h2v1h-2zM257.5 345.5h2v1h-2zM285.5 332.5h2v2h-2zM289.5 334.5h2v6h-2zM297.5 338.5h2v4h-2zM309.5 331.5h2v1h-2zM313.5 331.5h2v3h-2zM317.5 335.5h2v3h-2zM365.5 287.5h2v3h-2zM369.5 291.5h2v7h-2zM389.5 250.5h2v20h-2zM397.5 269.5h2v28h-2zM401.5 297.5h2v3h-2zM417.5 285.5h2v4h-2zM421.5 289.5h2v5h-2zM437.5 283.5h2v1h-2zM441.5 284.5h2v1h-2zM457.5 275.5h2v3h-2zM461.5 278.5h2v1h-2zM465.5 278.5h2v1h-2zM469.5 278.5h2v4h-2zM473.5 282.5h2v9h-2zM477.5 290.5h2v5h-2zM485.5 293.5h2v1h-2zM493.5 293.5h2v8h-2zM497.5 301.5h2v2h-2zM501.5 303.5h2v4h-2zM505.5 307.5h2v7h-2zM509.5 313.5h2v18h-2zM541.5 309.5h2v4h-2zM549.5 312.5h2v1h-2zM553.5 313.5h2v2h-2zM557.5 315.5h2v1h-2zM569.5 296.5h2v1h-2zM573.5 297.5h2v4h-2zM597.5 294.5h2v21h-2zM601.5 316.5h2v2h-2zM605.5 318.5h2v3h-2zM609.5 320.5h2v3h-2zM613.5 322.5h2v1h-2zM617.5 323.5h2v4h-2zM621.5 327.5h2v5h-2zM649.5 210.5h2v14h-2zM653.5 224.5h2v7h-2zM669.5 215.5h2v2h-2zM673.5 217.5h2v6h-2zM693.5 207.5h2v5h-2zM697.5 212.5h2v7h-2zM701.5 219.5h2v8h-2zM721.5 173.5h2v2h-2zM729.5 168.5h2v2h-2zM741.5 105.5h2v5h-2zM745.5 110.5h2v7h-2zM749.5 116.5h2v8h-2zM761.5 123.5h2v1h-2zM777.5 119.5h2v4h-2zM781.5 122.5h2v2h-2zM785.5 123.5h2v1h-2zM789.5 123.5h2v2h-2zM805.5 102.5h2v4h-2zM809.5 107.5h2v8h-2zM813.5 115.5h2v2h-2zM817.5 117.5h2v3h-2zM821.5 119.5h2v7h-2zM825.5 126.5h2v1h-2zM853.5 105.5h2v2h-2zM861.5 106.5h2v6h-2zM865.5 113.5h2v4h-2zM877.5 110.5h2v4h-2zM881.5 114.5h2v2h-2zM885.5 115.5h2v4h-2zM889.5 118.5h2v8h-2zM893.5 126.5h2v4h-2zM901.5 127.5h2v1h-2zM905.5 127.5h2v4h-2zM909.5 131.5h2v3h-2zM921.5 117.5h2v2h-2zM925.5 119.5h2v3h-2zM929.5 122.5h2v1h-2zM941.5 116.5h2v1h-2zM945.5 116.5h2v2h-2zM953.5 115.5h2v4h-2zM957.5 119.5h2v1h-2zM961.5 120.5h2v1h-2zM965.5 121.5h2v2h-2zM969.5 122.5h2v10h-2z" stroke="#00FF00" fill="#fff"/>
<polyline points="212.5,343.9 216.5,345.4 220.5,345.5 224.5,342.6 228.5,339.5 232.5,334.8 236.5,330.4 240.5,328.3 244.5,329.3 248.5,332.1 252.5,335.2 256.5,338.7 260.5,341.4 264.5,344 268.5,343.7 272.5,341.8 276.5,339.3 280.5,336.5 284.5,333.6 288.5,332.7 292.5,333.8 296.5,334.8 300.5,336.8 304.5,337.7 308.5,337.2 312.5,335.6 316.5,335 320.5,334.3 324.5,334.6 328.5,335 332.5,333 336.5,328.9 340.5,323.8 344.5,318.2 348.5,312.3 352.5,307.3 356.5,303.6 360.5,299.1 364.5,294.7 368.5,292.1 372.5,292.3 376.5,287.7 380.5,281.5 384.5,274.5 388.5,266.4 392.5,260.8 396.5,260.2 400.5,267.6 404.5,277.2 408.5,285.6 412.5,290 416.5,293 420.5,291.4 424.5,290.3 428.5,289.5 432.5,288.7 436.5,288.5 440.5,287.5 444.5,285.5 448.5,284.3 452.5,283 456.5,281.5 460.5,280.3 464.5,279.1 468.5,278.4 472.5,278.6 476.5,281.6 480.5,285 484.5,287.9 488.5,290.8 492.5,293 496.5,294.9 500.5,296.6 504.5,299.5 508.5,303.5 512.5,311.1 516.5,316.7 520.5,321.5 524.5,323.9 528.5,324.5 532.5,320.6 536.5,316.7 540.5,312.9 544.5,311.7 548.5,310.6 552.5,310.9 556.5,312.3 560.5,313.8 564.5,310.6 568.5,307.6 572.5,304.3 576.5,301.6 580.5,298.7 584.5,299.7 588.5,299.7 592.5,299.2 596.5,297.7 600.5,300.4 604.5,303.6 608.5,308.4 612.5,314.1 616.5,319.9 620.5,322.4 624.5,325.2 628.5,325.9 632.5,323.3 636.5,320.1 640.5,309.6 644.5,295 648.5,272.1 652.5,254.9 656.5,239.7 660.5,230.5 664.5,222.7 668.5,224 672.5,222.5 676.5,220.9 680.5,218.3 684.5,216.2 688.5,214.8 692.5,212.9 696.5,210.6 700.5,211.3 704.5,214.8 708.5,216.9 712.5,218.8 716.5,212.4 720.5,203.2 724.5,192.9 728.5,182.7 732.5,173.3 736.5,163.9 740.5,150.1 744.5,136.9 748.5,126.7 752.5,117.5 756.5,115.6 760.5,119.3 764.5,122.2 768.5,123.1 772.5,122.2 776.5,121.2 780.5,121.2 784.5,121.2 788.5,121.6 792.5,122.7 796.5,122.3 800.5,118.8 804.5,114.6 808.5,111.2 812.5,109.1 816.5,109.2 820.5,112 824.5,116.8 828.5,120.9 832.5,123 836.5,124 840.5,122.6 844.5,119.3 848.5,115.5 852.5,111.6 856.5,108.6 860.5,107.5 864.5,107.9 868.5,109.8 872.5,112 876.5,112.6 880.5,114.1 884.5,114.8 888.5,115.1 892.5,117 896.5,120.9 900.5,123.7 904.5,126 908.5,128.5 912.5,130.1 916.5,129.3 920.5,127.2 924.5,125.5 928.5,123.6 932.5,121.3 936.5,120.2 940.5,119.8 944.5,119.5 948.5,118.6 952.5,117.4 956.5,117.1 960.5,117.9 964.5,118.7 968.5,119.6 972.5,122.7" stroke="#FF0000" fill="none" stroke-width="1"/>
<polyline points="212.5,343.1 216.5,343.9 220.5,343.9 224.5,342.3 228.5,340.6 232.5,339.1 236.5,337.4 240.5,336.3 244.5,335.3 248.5,334 252.5,333.4 256.5,333.7 260.5,335.6 264.5,337.8 268.5,338.9 272.5,339.7 276.5,339.8 280.5,339.7 284.5,338.6 288.5,337.5 292.5,337 296.5,336.1 300.5,335.7 304.5,335.3 308.5,335 312.5,335 316.5,335.2 320.5,336.1 324.5,336.4 328.5,335.6 332.5,333.9 336.5,330.8 340.5,328.3 344.5,325.8 348.5,322.7 352.5,318.6 356.5,313.8 360.5,308.6 364.5,303.5 368.5,300 372.5,298.2 376.5,293.7 380.5,288.2 384.5,282.5 388.5,277.3 392.5,274.5 396.5,272 400.5,273.1 404.5,274.2 408.5,273.6 412.5,275.7 416.5,278.4 420.5,282.5 424.5,287.5 428.5,289.6 432.5,291.6 436.5,290.1 440.5,288.3 444.5,287.4 448.5,286.4 452.5,286.1 456.5,284.6 460.5,282.7 464.5,281.6 468.5,280.6 472.5,280.6 476.5,281.3 480.5,282.4 484.5,283.6 488.5,285 492.5,286.9 496.5,289.5 500.5,292.2 504.5,295.3 508.5,298.8 512.5,303.3 516.5,307.1 520.5,310.9 524.5,313.7 528.5,316.4 532.5,317.6 536.5,318.2 540.5,318.3 544.5,318.2 548.5,316.1 552.5,314.4 556.5,313.1 560.5,312.7 564.5,310.5 568.5,308.8 572.5,307.5 576.5,306.8 580.5,305.5 584.5,304.4 588.5,302.5 592.5,300.3 596.5,297.8 600.5,299.8 604.5,302.2 608.5,304.8 612.5,307.2 616.5,309.6 620.5,312.4 624.5,316.4 628.5,319.7 632.5,321.4 636.5,320.6 640.5,315.8 644.5,308.9 648.5,296.3 652.5,285.3 656.5,274.6 660.5,263.2 664.5,251.6 668.5,241.2 672.5,231.1 676.5,225.4 680.5,220.6 684.5,220.6 688.5,218.9 692.5,216.2 696.5,214.3 700.5,214.2 704.5,215.5 708.5,215.7 712.5,215 716.5,211 720.5,207 724.5,203.3 728.5,199 732.5,194.3 736.5,184.7 740.5,171.1 744.5,158.9 748.5,147.8 752.5,141.6 756.5,136 760.5,130.2 764.5,125.3 768.5,119.9 772.5,118.4 776.5,120 780.5,121.5 784.5,122.2 788.5,122.2 792.5,122.4 796.5,121.6 800.5,119.6 804.5,117.5 808.5,116 812.5,115.6 816.5,115 820.5,114.5 824.5,114.8 828.5,115 832.5,116 836.5,117.9 840.5,118.9 844.5,119.4 848.5,118.6 852.5,117.4 856.5,116 860.5,113.8 864.5,112.2 868.5,111.3 872.5,110.7 876.5,110.5 880.5,110.9 884.5,111.8 888.5,113.2 892.5,115.3 896.5,117.9 900.5,119.6 904.5,120.8 908.5,122.4 912.5,125 916.5,126.3 920.5,126.5 924.5,126.5 928.5,126.1 932.5,125.2 936.5,124.4 940.5,123.1 944.5,121.5 948.5,119.7 952.5,118.6 956.5,118.8 960.5,118.9 964.5,118.7 968.5,118.8 972.5,120.1" stroke="#FF0000" fill="none" stroke-width="1"/>
<polyline points="212.5,342.6 216.5,343.1 220.5,343.2 224.5,342.2 228.5,341.2 232.5,340.2 236.5,339.3 240.5,338.6 244.5,338 248.5,337.9 252.5,338 256.5,338.2 260.5,338.4 264.5,338.6 268.5,338.4 272.5,337.2 276.5,336.1 280.5,335.4 284.5,335.6 288.5,336.1 292.5,336.9 296.5,337.6 300.5,338.3 304.5,338.4 308.5,337.9 312.5,337.1 316.5,336.4 320.5,335.9 324.5,335.3 328.5,335 332.5,334.1 336.5,332.9 340.5,331.6 344.5,330.2 348.5,328.2 352.5,325.3 356.5,322.5 360.5,319.1 364.5,315.8 368.5,313.1 372.5,310.9 376.5,306.7 380.5,301.5 384.5,295.8 388.5,290.3 392.5,286.8 396.5,283.8 400.5,282.7 404.5,282.1 408.5,281.4 412.5,281 416.5,280.3 420.5,280.2 424.5,280.6 428.5,280.5 432.5,279.8 436.5,280.6 440.5,282.1 444.5,284.3 448.5,286.5 452.5,287.2 456.5,287.7 460.5,286.4 464.5,285 468.5,284.1 472.5,283.4 476.5,283.9 480.5,284.3 484.5,284.2 488.5,284.5 492.5,284.9 496.5,286 500.5,287.3 504.5,288.8 508.5,290.9 512.5,294.2 516.5,297.8 520.5,301.1 524.5,303.8 528.5,306.3 532.5,308.3 536.5,309.4 540.5,310.3 544.5,311.7 548.5,312.9 552.5,314.2 556.5,315.2 560.5,316.1 564.5,315.4 568.5,314.2 572.5,312 576.5,310.2 580.5,308.5 584.5,307.3 588.5,305.9 592.5,304.8 596.5,303.8 600.5,304.3 604.5,304.6 608.5,305.2 612.5,305.9 616.5,306.4 620.5,307.2 624.5,309.5 628.5,311.4 632.5,312.2 636.5,312.6 640.5,310.8 644.5,307.9 648.5,302.1 652.5,297.4 656.5,293.2 660.5,287.5 664.5,281 668.5,274 672.5,266.9 676.5,260.3 680.5,252.8 684.5,244.7 688.5,236.9 692.5,230.1 696.5,223.8 700.5,220.1 704.5,217.9 708.5,218.6 712.5,218.1 716.5,214.6 720.5,211 724.5,208 728.5,204.8 732.5,201.7 736.5,195.6 740.5,188.2 744.5,181.5 748.5,175.4 752.5,169.9 756.5,164 760.5,157.5 764.5,150.7 768.5,144.2 772.5,137.7 776.5,133.6 780.5,130.2 784.5,126.8 788.5,123.8 792.5,120.8 796.5,119.7 800.5,119.8 804.5,119.3 808.5,118.6 812.5,118 816.5,117.6 820.5,117.4 824.5,117.5 828.5,117.9 832.5,118.3 836.5,118.5 840.5,117.8 844.5,116.9 848.5,115.9 852.5,114.6 856.5,114 860.5,114 864.5,114.7 868.5,115.4 872.5,115.6 876.5,115.1 880.5,114.7 884.5,114 888.5,113.5 892.5,113.6 896.5,114.1 900.5,115.1 904.5,116.2 908.5,117.8 912.5,119.7 916.5,120.9 920.5,121.7 924.5,122.1 928.5,122.4 932.5,122.8 936.5,123.4 940.5,123.6 944.5,123.7 948.5,123.6 952.5,122.9 956.5,122.2 960.5,121.6 964.5,121.2 968.5,120.6 972.5,120.5" stroke="#FF0000" fill="none" stroke-width="1"/>
<polyline points="212.5,342.4 216.5,342.7 220.5,342.7 224.5,342.1 228.5,341.5 232.5,341 236.5,340.4 240.5,340 244.5,339.7 248.5,339.6 252.5,339.7 256.5,339.8 260.5,339.9 264.5,340.1 268.5,339.9 272.5,339.6 276.5,339.3 280.5,338.9 284.5,338.4 288.5,338.1 292.5,338.1 296.5,337.9 300.5,337.9 304.5,337.6 308.5,337.2 312.5,336.8 316.5,336.2 320.5,335.7 324.5,335.5 328.5,335.7 332.5,335.6 336.5,335 340.5,334.5 344.5,333.6 348.5,332.5 352.5,330.8 356.5,328.9 360.5,326.9 364.5,324.6 368.5,322.5 372.5,320.9 376.5,318.5 380.5,315.8 384.5,312.7 388.5,309.6 392.5,307.1 396.5,304.4 400.5,302.8 404.5,301.2 408.5,299.6 412.5,298 416.5,296.2 420.5,294.4 424.5,292.7 428.5,290.9 432.5,289.1 436.5,287.6 440.5,286.5 444.5,285.4 448.5,284.4 452.5,283.5 456.5,282.7 460.5,282 464.5,281.5 468.5,281.2 472.5,280.9 476.5,280.6 480.5,281.5 484.5,282.8 488.5,284.4 492.5,286 496.5,287.2 500.5,288.5 504.5,288.9 508.5,289.4 512.5,290.9 516.5,292.3 520.5,294 524.5,295.1 528.5,296 532.5,296.9 536.5,297.7 540.5,298.7 544.5,299.8 548.5,300.8 552.5,302 556.5,303.3 560.5,304.9 564.5,305.6 568.5,306.3 572.5,307 576.5,307.8 580.5,308.2 584.5,308.4 588.5,308.6 592.5,308.6 596.5,308.7 600.5,309.2 604.5,309.8 608.5,310.3 612.5,310.6 616.5,310.3 620.5,310.3 624.5,310.5 628.5,310.7 632.5,310.4 636.5,310.2 640.5,308.9 644.5,307.1 648.5,303.1 652.5,299.7 656.5,296.5 660.5,293.2 664.5,289.5 668.5,286.4 672.5,283.4 676.5,280.5 680.5,277.2 684.5,273.7 688.5,270.1 692.5,266.7 696.5,263.5 700.5,260.6 704.5,257.2 708.5,253.4 712.5,249.4 716.5,243.9 720.5,238.2 724.5,232.3 728.5,226 732.5,220.1 736.5,213.3 740.5,205.5 744.5,199.1 748.5,193.6 752.5,190.3 756.5,186.5 760.5,182.3 764.5,178.3 768.5,174.5 772.5,170.8 776.5,167 780.5,163.1 784.5,159.6 788.5,156.3 792.5,153.1 796.5,149.6 800.5,145.5 804.5,141 808.5,136.4 812.5,132.3 816.5,128.5 820.5,126.2 824.5,124.4 828.5,122.5 832.5,120.9 836.5,119 840.5,118.2 844.5,118.5 848.5,118.4 852.5,118 856.5,117.3 860.5,116.7 864.5,116.3 868.5,116 872.5,115.8 876.5,115.5 880.5,115.3 884.5,115 888.5,114.9 892.5,115 896.5,115.1 900.5,115.6 904.5,116.4 908.5,117.5 912.5,118.6 916.5,119 920.5,119 924.5,119 928.5,118.8 932.5,118.7 936.5,118.5 940.5,118.2 944.5,118.4 948.5,118.7 952.5,119 956.5,119.5 960.5,120 964.5,120.6 968.5,121 972.5,121.5" stroke="#FF0000" fill="none" stroke-width="1"/>
<polyline points="210.5,342.2 214.5,342.3 218.5,342.3 222.5,342.1 226.5,341.8 230.5,341.5 234.5,341.2 238.5,341 242.5,340.8 246.5,340.8 250.5,340.8 254.5,340.9 258.5,341 262.5,341 266.5,341 270.5,340.8 274.5,340.6 278.5,340.4 282.5,340.2 286.5,340.1 290.5,340 294.5,339.9 298.5,339.9 302.5,339.8 306.5,339.6 310.5,339.4 314.5,339.3 318.5,339.2 322.5,339.1 326.5,338.9 330.5,338.5 334.5,338 338.5,337.4 342.5,336.8 346.5,336.1 350.5,335.2 354.5,334.3 358.5,333.3 362.5,332.3 366.5,331.3 370.5,330.4 374.5,329.1 378.5,327.5 382.5,325.8 386.5,324 390.5,322.6 394.5,321.2 398.5,320.3 402.5,319.5 406.5,318.6 410.5,317.6 414.5,316.5 418.5,315.3 422.5,314.2 426.5,313.2 430.5,312.4 434.5,311.6 438.5,310.7 442.5,309.9 446.5,309 450.5,308 454.5,306.7 458.5,305.5 462.5,304.2 466.5,302.9 470.5,301.7 474.5,300.8 478.5,300 482.5,299.3 486.5,298.5 490.5,297.8 494.5,297.1 498.5,296.4 502.5,295.8 506.5,295.3 510.5,295.2 514.5,295.2 518.5,295.1 522.5,294.8 526.5,294.4 530.5,293.9 534.5,293.4 538.5,293.1 542.5,293.1 546.5,293.1 550.5,293.2 554.5,293.4 558.5,293.8 562.5,293.8 566.5,293.9 570.5,294.1 574.5,294.3 578.5,294.4 582.5,295 586.5,295.7 590.5,296.5 594.5,297.3 598.5,298.2 602.5,299.1 606.5,299.6 610.5,300 614.5,300.6 618.5,301.3 622.5,302.2 626.5,302.9 630.5,303.2 634.5,303.6 638.5,303.3 642.5,302.9 646.5,301.4 650.5,300.3 654.5,299.3 658.5,298.3 662.5,297.2 666.5,296 670.5,294.8 674.5,293.8 678.5,292.5 682.5,290.9 686.5,289.3 690.5,287.6 694.5,286 698.5,284.6 702.5,283.2 706.5,281.6 710.5,279.9 714.5,277.3 718.5,274.3 722.5,271.3 726.5,268.3 730.5,265.4 734.5,261.8 738.5,257.9 742.5,254 746.5,250.3 750.5,246.7 754.5,243.1 758.5,239.4 762.5,235.7 766.5,232 770.5,228.6 774.5,225.2 778.5,221.8 782.5,218.4 786.5,215 790.5,211.6 794.5,208.1 798.5,204.5 802.5,200.8 806.5,196.8 810.5,192.9 814.5,189 818.5,185.1 822.5,181.3 826.5,177.4 830.5,173.4 834.5,169.6 838.5,165.8 842.5,162 846.5,158.8 850.5,155.8 854.5,153.8 858.5,151.6 862.5,149.3 866.5,147.1 870.5,145.2 874.5,143.1 878.5,141.2 882.5,139.1 886.5,137.2 890.5,135.6 894.5,134.1 898.5,132.6 902.5,131 906.5,129.3 910.5,127.5 914.5,125.7 918.5,123.8 922.5,122.6 926.5,121.6 930.5,120.6 934.5,119.7 938.5,118.6 942.5,118.3 946.5,118.6 950.5,118.7 954.5,118.7 958.5,118.7 962.5,118.6 966.5,118.6 970.5,118.8" stroke="#FF0000" fill="none" stroke-width="1"/>
<polyline points="210.5,294.6 214.5,296 218.5,297.3 222.5,298.4 226.5,299.5 230.5,300.7 234.5,301.8 238.5,303 242.5,304.2 246.5,305.5 250.5,306.8 254.5,308.1 258.5,309.4 262.5,310.7 266.5,311.9 270.5,313.1 274.5,314.3 278.5,315.5 282.5,316.7 286.5,317.9 290.5,319.1 294.5,320.4 298.5,321.7 302.5,322.9 306.5,324 310.5,325.2 314.5,326.4 318.5,327.7 322.5,328.9 326.5,330.1 330.5,331.2 334.5,331.3 338.5,331.5 342.5,331.6 346.5,331.7 350.5,331.7 354.5,331.7 358.5,331.6 362.5,331.5 366.5,331.4 370.5,331.5 374.5,331.2 378.5,330.9 382.5,330.4 386.5,330 390.5,329.7 394.5,329.4 398.5,329.4 402.5,329.5 406.5,329.4 410.5,329.4 414.5,329.3 418.5,328.7 422.5,328.3 426.5,327.8 430.5,327.2 434.5,326.7 438.5,326.1 442.5,325.6 446.5,325 450.5,324.4 454.5,323.8 458.5,323.2 462.5,322.5 466.5,321.9 470.5,321.4 474.5,320.9 478.5,320.4 482.5,319.9 486.5,319.5 490.5,319 494.5,318.6 498.5,318.2 502.5,317.9 506.5,317.6 510.5,317.5 514.5,317.4 518.5,317.2 522.5,317 526.5,316.8 530.5,316.5 534.5,316.2 538.5,315.8 542.5,315.6 546.5,315.3 550.5,315 554.5,314.7 558.5,314.5 562.5,314.1 566.5,313.6 570.5,313.2 574.5,312.8 578.5,312.4 582.5,312 586.5,311.6 590.5,311.1 594.5,310.7 598.5,310.4 602.5,310.2 606.5,310 610.5,309.8 614.5,309.6 618.5,309.5 622.5,309.4 626.5,309.1 630.5,308.7 634.5,308.4 638.5,307.9 642.5,307.2 646.5,306.1 650.5,305.1 654.5,304.1 658.5,303.1 662.5,302 666.5,300.7 670.5,299.5 674.5,298.3 678.5,297.1 682.5,295.8 686.5,294.6 690.5,293.4 694.5,292.3 698.5,291.2 702.5,290.2 706.5,289 710.5,287.9 714.5,286.3 718.5,284.7 722.5,283.2 726.5,281.7 730.5,280.1 734.5,278.1 738.5,275.9 742.5,273.7 746.5,271.7 750.5,269.9 754.5,268.1 758.5,266.3 762.5,264.6 766.5,262.9 770.5,261.2 774.5,259.5 778.5,258 782.5,256.4 786.5,254.7 790.5,253.3 794.5,251.9 798.5,250.5 802.5,249.1 806.5,247.5 810.5,246 814.5,244.3 818.5,242.5 822.5,241 826.5,239.4 830.5,237.8 834.5,236.2 838.5,234.5 842.5,232.8 846.5,231 850.5,229.3 854.5,227.6 858.5,225.9 862.5,224.3 866.5,222.7 870.5,221.2 874.5,219.6 878.5,218 882.5,216.4 886.5,214.9 890.5,213.3 894.5,211.7 898.5,210.1 902.5,208.5 906.5,206.9 910.5,205.3 914.5,203.6 918.5,201.8 922.5,199.9 926.5,197.9 930.5,196 934.5,194 938.5,192 942.5,190.1 946.5,188.2 950.5,186.4 954.5,184.5 958.5,182.7 962.5,180.9 966.5,179 970.5,177.3" stroke="#FF0000" fill="none" stroke-width="1"/>
<polyline points="210.5,278.6 214.5,279 218.5,279.4 222.5,279.7 226.5,280 230.5,280.3 234.5,280.6 238.5,280.9 242.5,281.3 246.5,281.6 250.5,282 254.5,282.4 258.5,282.8 262.5,283.2 266.5,283.6 270.5,283.9 274.5,284.2 278.5,284.6 282.5,284.9 286.5,285.2 290.5,285.6 294.5,286 298.5,286.4 302.5,286.7 306.5,287 310.5,287.4 314.5,287.7 318.5,288.1 322.5,288.4 326.5,288.8 330.5,289 334.5,289.3 338.5,289.5 342.5,289.8 346.5,289.9 350.5,290.1 354.5,290.3 358.5,290.4 362.5,290.5 366.5,290.6 370.5,290.8 374.5,290.9 378.5,290.8 382.5,290.8 386.5,290.7 390.5,290.8 394.5,290.8 398.5,291 402.5,291.1 406.5,291.3 410.5,291.4 414.5,291.5 418.5,291.6 422.5,291.8 426.5,291.9 430.5,292 434.5,292.1 438.5,292.2 442.5,292.3 446.5,292.4 450.5,292.5 454.5,292.6 458.5,292.6 462.5,292.7 466.5,292.8 470.5,292.9 474.5,293 478.5,293.2 482.5,293.3 486.5,293.5 490.5,293.6 494.5,293.8 498.5,294 502.5,294.2 506.5,294.4 510.5,294.8 514.5,295.1 518.5,295.4 522.5,295.7 526.5,295.9 530.5,296.1 534.5,296.4 538.5,296.6 542.5,296.8 546.5,297.1 550.5,297.3 554.5,297.5 558.5,297.8 562.5,298 566.5,298.1 570.5,298.3 574.5,298.5 578.5,298.7 582.5,298.8 586.5,299 590.5,299.2 594.5,299.3 598.5,299.6 602.5,299.8 606.5,300.1 610.5,300.4 614.5,300.7 618.5,301 622.5,301.3 626.5,301.9 630.5,302.4 634.5,302.8 638.5,303.1 642.5,303.4 646.5,303.4 650.5,303.5 654.5,303.6 658.5,303.7 662.5,303.7 666.5,303.7 670.5,303.8 674.5,303.9 678.5,303.9 682.5,303.9 686.5,303.9 690.5,303.9 694.5,303.9 698.5,303.9 702.5,304 706.5,304.1 710.5,304.1 714.5,304 718.5,303.8 722.5,303.6 726.5,303.4 730.5,303.3 734.5,302.9 738.5,302.4 742.5,301.9 746.5,301.5 750.5,300.6 754.5,299.8 758.5,299 762.5,298.1 766.5,297.3 770.5,296.4 774.5,295.6 778.5,294.7 782.5,293.9 786.5,293.1 790.5,292.2 794.5,291.4 798.5,290.5 802.5,289.5 806.5,288.6 810.5,287.7 814.5,286.9 818.5,286 822.5,285.2 826.5,284.4 830.5,283.5 834.5,282.5 838.5,281.4 842.5,280.3 846.5,279.1 850.5,278 854.5,276.9 858.5,275.7 862.5,274.6 866.5,273.6 870.5,272.5 874.5,271.4 878.5,270.3 882.5,269.2 886.5,268.1 890.5,267.1 894.5,266 898.5,265 902.5,264 906.5,263 910.5,262 914.5,260.9 918.5,259.9 922.5,258.8 926.5,257.7 930.5,256.7 934.5,255.6 938.5,254.5 942.5,253.4 946.5,252.4 950.5,251.3 954.5,250.2 958.5,249.1 962.5,248.1 966.5,247 970.5,246" stroke="#FF0000" fill="none" stroke-width="1"/>
<path d="M210 232.500H978" stroke="#FF0000" stroke-width="1" fill="none"/>
<polyline points="209.5,402.4 218.5,414.4 229,407 238,396.4 244,398 256,427.9 266.4,445.2 272.4,439.9 283,410 291.8,397.3 297.8,403.9 308.3,424.9 320.3,420.4 330.7,418.9 338.2,408.4 347.2,393.4 357.7,389 371.2,395 384.6,395 395.1,402.4 405.6,429.4 414.6,443.4 423.6,439.9 435.5,424.9 447.5,406.9 459.5,396.4 470,397.3 480.4,421.9 489.4,438.4 499.9,447.3 505,446.5 515.5,450.4 526,444.4 535,424.9 542.4,410 550,399.5 560.4,407 567.9,409.3 578.4,407 588.9,408.4 597.9,413 608.4,432.4 615.8,450.4 624.8,453.4 632.3,438.4 639.8,413 648.8,390.5 657.8,384.5 666.8,385.4 675.8,387.5 684.7,393.5 693.7,401 702.7,416 711.7,429.4 719.2,423.4 726.7,399.5 734.2,387.5 744.7,382.4 753.7,387.5 765,395.7 775.5,411.4 784.5,415.9 793.4,418.3 802.4,408.4 811.4,399.4 815.9,402.4 821.9,418.9 829.4,435.4 836.9,447.3 841.3,444.3 848.8,423.4 854.8,402.4 860.8,391.3 866.8,396.4 874.3,414.4 883.3,426.4 892.2,438.4 901.2,444.3 911.7,447.3 917.7,441.3 925.1,429.4 929.7,424.9 938.6,417.4 947.6,412.9 955.1,405.4 962.6,405.4 970.1,415.9" stroke="#FF0000" fill="none" stroke-dasharray="3 3"/>
<polyline points="209.5,410 214,423.4 218.5,420.4 226,390.4 233.4,393.4 244,410 259,456.3 266.4,439.9 278.4,392 284.3,388.4 290.3,395 302.3,439.3 308.3,420.4 314.3,411.4 320.3,421.9 326.3,427.3 338.2,391.3 347.2,391.3 351.7,386.6 359.2,391.3 366.7,394.3 371.2,403.9 383.1,387.5 395.1,418.9 402.6,444.3 407.1,449.4 411.6,447.3 414.6,438.4 423.6,432.4 428,435.4 438.5,397.9 447.5,404.5 458,383.6 465.5,403.9 474.5,424.9 482,448.2 489.4,441.3 498.4,454.8 505,451.8 511,445.9 517,448.3 523,441.4 530.5,417.4 536.5,401 542.4,393.5 550,401 559,417.4 571,396.5 575.4,405.4 578.4,404 582.9,418.3 594.3,404 599.4,427.9 606.9,459.4 614.3,453.4 623.3,453.4 627.8,445.9 632.3,415.9 638.3,382.4 642.2,386 645.8,381.5 650.3,383.6 654.8,382.4 659.3,389.6 663.8,388.4 669.8,382.4 678.8,398 681.8,400.4 687.7,397.4 695.2,407 702.7,442.3 705.7,441.4 710.2,432.4 716.2,401 720.7,390.5 725.2,386.6 731.2,386.6 735.7,380.6 743.2,380 747.7,383.6 755.1,399.5 765,403.6 774,423.4 783,411.4 785.4,410.5 790.4,421.3 794.9,420.4 802.4,390.4 806.9,386.6 812.9,406.9 818.9,432.4 826.4,450.3 830.9,454.2 834.5,451.8 842.8,412.9 847.3,392 851.2,383 859.3,389 865.3,406.9 869.8,424.9 874.3,430.9 878.8,419.5 884.8,436.9 890.7,448.8 895.2,451.2 899.7,449.4 902.7,443.4 908.7,445.8 914.7,447.3 918.3,426.4 922.2,414.4 926.7,409.9 929.7,424.3 934.2,421.9 940.1,409.3 946.1,403.3 952.1,406.3 955.1,405.4 961.1,409.9 964.1,414.4 970.1,440.4" stroke="#20B2AA" fill="none"/>
<polyline points="209.5,525.2 214,527.3 224.5,505.1 227.5,506.3 231.3,513.2 234.9,511.7 239.4,517.1 245.4,520.7 250.5,529.1 254.4,525.2 258.9,529.1 263.4,523.1 267.9,522.2 272.4,517.7 281.3,513.8 288.8,522.2 294.8,526.1 302.3,522.2 306.8,516.2 311.3,521.3 315.8,520.1 324.8,522.2 333.7,505.7 338.2,508.7 345.7,507.2 350.2,499.7 356.2,498.8 365.2,496.1 369.7,510.2 374.2,498.2 380.1,494.3 386.1,494.3 390.6,510.2 394.2,511.1 398.1,522.2 401.1,525.2 407.1,520.1 410.1,522.2 414.6,518.3 420.6,520.7 426.6,523.1 432.5,519.2 438.5,517.7 444.5,520.7 452,514.7 458,514.1 462.5,520.1 467,517.1 477.5,526.7 486.4,525.2 498.4,532.1 501.4,529.7 505,533 510.4,544.1 518.5,541.2 526,531.3 530.5,530.4 535,526.2 541,528.3 550,528.3 554.4,532.8 561.9,517.8 566.4,518.4 570.3,513.3 574.5,522.3 578.4,520.2 583.5,523.2 590.4,515.4 594.3,517.2 598.5,529.2 603.9,531.3 608.4,534.3 614.3,533.4 618.2,535.8 622.4,540.3 629.3,520.8 633.8,518.4 639.8,505.8 646.4,495.3 651.2,502.8 657.8,505.2 665.3,501.3 674.3,508.2 681.8,503.4 692.2,505.8 702.1,518.4 707.2,513.3 711.7,512.4 717.1,502.2 722.2,506.4 729.7,504.3 738.7,494.4 746.2,502.2 753.7,503.4 765,503.4 778.5,502.1 790.4,508.1 800.9,500.3 805.4,502.1 809.9,510.2 818.9,514.7 823.4,515.3 830.9,518.3 838.4,510.2 842.2,511.7 850.3,504.2 854.2,511.7 860.2,512.3 865.3,523.1 873.4,515.3 880.3,520.7 884.8,521.3 894.3,528.2 902.1,523.7 910.2,531.2 914.7,529.1 918.6,515.3 923.7,523.1 929.7,525.2 935.7,520.1 944.6,519.2 955.1,519.2 958.1,520.7 962.6,521.3 966.2,525.2 970.1,531.2" stroke="#20B2AA" fill="none"/>
<rect x="212" y="82" width="176" height="10" fill="#000"/>
<rect x="211" y="115" width="57" height="12" fill="#000"/>
<rect x="212" y="376" width="140" height="10" fill="#000"/>
<rect x="212" y="478" width="72" height="10" fill="#000"/>
<rect x="981" y="126" width="35" height="11" fill="#fff"/>
<rect x="981" y="226" width="35" height="11" fill="#FF0000"/>
<g shape-rendering="auto"><text xml:space="preserve" x="213" y="90" fill="#fff" letter-spacing="0.2">EURUSD,M15  1.2100 1.2101 1.2090 1.2092</text><text xml:space="preserve" x="214" y="123" fill="#fff" letter-spacing="0.1">#205622 sell</text><text xml:space="preserve" x="213" y="384" fill="#fff">Stochastic(8,5,3)  30.0000  53.1397</text><text xml:space="preserve" x="213" y="486" fill="#fff">RSI(14)  40.9195</text><text xml:space="preserve" x="981.5" y="88.9" fill="#fff">1.2125</text><text xml:space="preserve" x="981.5" y="122.9" fill="#fff">1.2100</text><text xml:space="preserve" x="981.5" y="157.9" fill="#fff">1.2075</text><text xml:space="preserve" x="981.5" y="192.9" fill="#fff">1.2050</text><text xml:space="preserve" x="981.5" y="226.9" fill="#fff">1.2025</text><text xml:space="preserve" x="981.5" y="260.9" fill="#fff">1.2000</text><text xml:space="preserve" x="981.5" y="295.9" fill="#fff">1.1975</text><text xml:space="preserve" x="981.5" y="330.9" fill="#fff">1.1950</text><text xml:space="preserve" x="981.5" y="364.9" fill="#fff">1.1925</text><text xml:space="preserve" x="981.5" y="378" fill="#fff">100</text><text xml:space="preserve" x="981.5" y="399.5" fill="#fff">75</text><text xml:space="preserve" x="981.5" y="424.5" fill="#fff">50</text><text xml:space="preserve" x="981.5" y="449.5" fill="#fff">25</text><text xml:space="preserve" x="981.5" y="469" fill="#fff">0</text><text xml:space="preserve" x="981.5" y="480" fill="#fff">100</text><text xml:space="preserve" x="981.5" y="501.5" fill="#fff">75</text><text xml:space="preserve" x="981.5" y="526.5" fill="#fff">50</text><text xml:space="preserve" x="981.5" y="551.5" fill="#fff">25</text><text xml:space="preserve" x="981.5" y="571" fill="#fff">0</text><text xml:space="preserve" x="210" y="586" fill="#fff">24 Oct 08:15</text><text xml:space="preserve" x="274" y="586" fill="#fff">24 Oct 12:15</text><text xml:space="preserve" x="338" y="586" fill="#fff">24 Oct 16:15</text><text xml:space="preserve" x="402" y="586" fill="#fff">24 Oct 20:15</text><text xml:space="preserve" x="466" y="586" fill="#fff">25 Oct 00:15</text><text xml:space="preserve" x="530" y="586" fill="#fff">25 Oct 04:15</text><text xml:space="preserve" x="594" y="586" fill="#fff">25 Oct 08:15</text><text xml:space="preserve" x="658" y="586" fill="#fff">25 Oct 12:15</text><text xml:space="preserve" x="722" y="586" fill="#fff">25 Oct 16:15</text><text xml:space="preserve" x="786" y="586" fill="#fff">25 Oct 20:15</text><text xml:space="preserve" x="850" y="586" fill="#fff">26 Oct 00:15</text><text xml:space="preserve" x="914" y="586" fill="#fff">26 Oct 04:15</text><text xml:space="preserve" x="983.5" y="135" fill="#000">1.2092</text><text xml:space="preserve" x="983.5" y="235" fill="#000">1.2019</text></g>
</svg>
<div class="a " style="left:162px;top:178px;width:273px;height:14px;background:#FFFFE1;border:1px solid #000;padding-left:3px;line-height:12px;box-shadow:1px 1px 0 #303030"><span class="sm">115.11/115.15 115.33/114.94 2005.10.26 07:57</span></div>
<svg class="a" style="left:8px;top:599px" width="8" height="8" viewBox="0 0 8 8" ><path d="M1 1l6 6M7 1l-6 6" stroke="#000" stroke-width="1.800"/></svg><div class="a " style="left:5px;top:610px;width:13px;height:99px;background:#7B97E0"></div><div class="a cj" style="left:-1px;top:689px;width:26px;height:13px;color:#E4EAFB;font-size:11px;line-height:13px;text-align:center;transform:rotate(-90deg)">终端</div><div class="a " style="left:22px;top:598px;width:995px;height:97px;background:#fff"></div><div class="a th" style="left:22px;width:91px;text-align:left;padding-left:5px;"><span class="cj">定单号</span></div><div class="a th" style="left:113px;width:168px;"><span class="cj">时间</span></div><div class="a th" style="left:281px;width:77px;"><span class="cj">类型</span></div><div class="a th" style="left:358px;width:46px;"><span class="cj">手数</span></div><div class="a th" style="left:404px;width:68px;"><span class="cj">商品</span></div><div class="a th" style="left:472px;width:76px;"><span class="cj">价位</span></div><div class="a th" style="left:548px;width:76px;"><span class="cj">止损</span></div><div class="a th" style="left:624px;width:76px;"><span class="cj">获利</span></div><div class="a th" style="left:700px;width:77px;"><span class="cj">价位</span></div><div class="a th" style="left:777px;width:76px;"><span class="cj">佣金</span></div><div class="a th" style="left:853px;width:75px;"><span class="cj">利息</span></div><div class="a th" style="left:928px;width:86px;"><span class="cj">盈亏</span></div><div class="a " style="left:22px;top:617px;width:993px;height:17px;background:#316AC5"></div><div class="a td" style="left:22px;width:91px;text-align:left;padding-left:19px;"><span class="sm">205622</span></div><div class="a td" style="left:113px;width:168px;"><span class="sm">2005.10.26 07:52</span></div><div class="a td" style="left:281px;width:77px;"><span class="sm">sell</span></div><div class="a td" style="left:358px;width:46px;"><span class="sm">2.00</span></div><div class="a td" style="left:404px;width:68px;"><span class="sm">eurusd</span></div><div class="a td" style="left:472px;width:76px;"><span class="sm">1.2097</span></div><div class="a td" style="left:548px;width:76px;"><span class="sm">1.2135</span></div><div class="a td" style="left:624px;width:76px;"><span class="sm">0.0000</span></div><div class="a td" style="left:700px;width:77px;"><span class="sm">1.2094</span></div><div class="a td" style="left:777px;width:76px;"><span class="sm">0.00</span></div><div class="a td" style="left:853px;width:75px;"><span class="sm">0.00</span></div><div class="a td" style="left:928px;width:86px;border-right:0;"><span class="sm">60.00</span></div><svg class="a" style="left:26px;top:619px" width="10" height="13" viewBox="0 0 10 13" ><rect x="0.500" y="0.500" width="9" height="12" fill="#fff" stroke="#203080"/><path d="M2.500 4h4M2.500 6.500h4M2.500 9h5" stroke="#2040C0"/></svg><div class="a " style="left:22px;top:634px;width:993px;height:17px;background:#C9C9C9"></div><svg class="a" style="left:25px;top:637px" width="12" height="11" viewBox="0 0 12 11" ><path d="M6 0l6 6H8.500v4h-5V6H0z" fill="#0000FF"/></svg><div class="a sm" style="left:42px;top:636px;line-height:13px">Balance: 5000.00  Credit: 0  Equity: 5060.00  Margin: 2000 Free margin: 3060 Margin level: 253.0%</div><div class="a sm" style="left:950px;top:636px;width:60px;text-align:right;line-height:13px">60.00</div><div class="a " style="left:22px;top:694px;width:995px;height:1px;background:#000"></div><svg class="a" style="left:20px;top:694px" width="220" height="16" viewBox="0 0 220 16" ><path d="M2 0.500L7.5 14.500H35L40 0.500" fill="#fff" stroke="#000"/><path d="M35 14.500H207L212 0.500" fill="none" stroke="#000"/><path d="M64.5 0.500L69 14.500" fill="none" stroke="#000"/><path d="M113 0.500L118 14.500" fill="none" stroke="#000"/><path d="M144.5 0.500L149.5 14.500" fill="none" stroke="#000"/><path d="M176 0.500L181 14.500" fill="none" stroke="#000"/></svg><div class="a cj" style="left:28px;top:696px;width:26px;text-align:center;font-size:9px;line-height:11px;font-weight:bold">交易</div><div class="a cj" style="left:59px;top:696px;width:26px;text-align:center;font-size:9px;line-height:11px;font-weight:bold">新闻</div><div class="a cj" style="left:90px;top:696px;width:45px;text-align:center;font-size:9px;line-height:11px;font-weight:bold">帐户历史</div><div class="a cj" style="left:139px;top:696px;width:26px;text-align:center;font-size:9px;line-height:11px;font-weight:bold">警报</div><div class="a cj" style="left:170px;top:696px;width:26px;text-align:center;font-size:9px;line-height:11px;font-weight:bold">邮箱</div><div class="a cj" style="left:202px;top:696px;width:26px;text-align:center;font-size:9px;line-height:11px;font-weight:bold">日志</div>
<div class="a pane" style="left:251px;width:113px"></div><div class="a pane" style="left:366px;width:113px"></div><div class="a pane" style="left:481px;width:86px"></div><div class="a pane" style="left:569px;width:84px"></div><div class="a pane" style="left:655px;width:83px"></div><div class="a pane" style="left:740px;width:84px"></div><div class="a pane" style="left:826px;width:84px"></div><div class="a pane" style="left:912px;width:88px"></div><div class="a " style="left:915px;top:718px;width:86px;height:14px;background:#30E840"></div><div class="a " style="left:256px;top:718px;font:11px/14px Liberation Sans,sans-serif">Default</div><div class="a " style="left:918px;top:718px;font:11px/14px Liberation Sans,sans-serif">225/0 kb</div><svg class="a" style="left:1005px;top:720px" width="13" height="13" viewBox="0 0 13 13" ><path d="M12 1L1 12M12 5L5 12M12 9L9 12" stroke="#ACA899" stroke-width="1.300"/></svg>
</body></html>
